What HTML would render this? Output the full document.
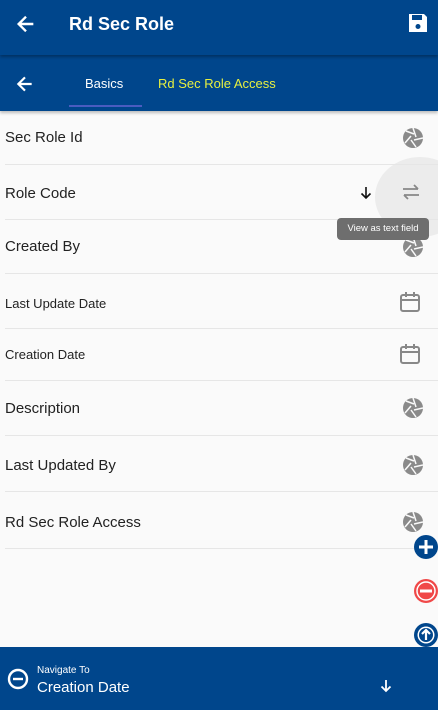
<!DOCTYPE html>
<html><head><meta charset="utf-8"><style>
*{margin:0;padding:0;box-sizing:border-box}
body{width:438px;height:710px;overflow:hidden;background:#fafafa;font-family:"Liberation Sans",sans-serif;position:relative}
.top{position:absolute;left:0;top:0;width:438px;height:55px;background:#00468c;box-shadow:0 2px 3px rgba(0,0,0,.3);z-index:2}
.tabs{position:absolute;left:0;top:55px;width:438px;height:56px;background:#00468c;box-shadow:0 2px 3px rgba(0,0,0,.25);z-index:1}
.t{position:absolute;color:#fff}
.row{position:absolute;left:5px;width:433px;border-bottom:1px solid #e6e6e6}
.lab{position:absolute;left:0;color:#222;font-size:15px}
.ic{position:absolute;left:403px}
.bot{position:absolute;left:0;top:647px;width:438px;height:63px;background:#00468c}
</style></head><body>
<div class="top">
<svg class="t" style="left:15px;top:13px" width="22" height="22" viewBox="0 0 24 24"><path d="M20 12H5M12 4l-8 8 8 8" stroke="#fff" stroke-width="2.6" fill="none"/></svg>
<div class="t" style="left:69px;top:14px;font-size:18px;font-weight:bold">Rd Sec Role</div>
<svg class="t" style="left:408px;top:13px" width="20" height="20" viewBox="0 0 20 20"><path d="M1 1h15l3 3v15H1z" fill="#fff"/><rect x="4" y="2" width="10" height="5" fill="#00468c"/><circle cx="10" cy="13.5" r="2.5" fill="#00468c"/></svg>
</div>
<div class="tabs">
<svg class="t" style="left:15px;top:19px" width="20" height="20" viewBox="0 0 24 24"><path d="M20 12H5M12 4l-8 8 8 8" stroke="#fff" stroke-width="2.6" fill="none"/></svg>
<div class="t" style="left:85px;top:21px;font-size:13px">Basics</div>
<div class="t" style="left:158px;top:21px;font-size:13px;color:#e6f040">Rd Sec Role Access</div>
<div style="position:absolute;left:69px;top:50px;width:73px;height:2px;background:#4a5cc0"></div>
</div>
<div style="position:absolute;left:375px;top:157px;width:90px;height:80px;border-radius:50%;background:#ececec"></div>

<div class="row" style="top:111px;height:54px"><div class="lab" style="top:18px">Sec Role Id</div></div>
<div class="row" style="top:165px;height:55px"><div class="lab" style="top:20px">Role Code</div></div>
<div class="row" style="top:220px;height:54px"><div class="lab" style="top:18px">Created By</div></div>
<div class="row" style="top:274px;height:55px"><div class="lab" style="top:22px;font-size:13px">Last Update Date</div></div>
<div class="row" style="top:329px;height:52px"><div class="lab" style="top:18px;font-size:13px">Creation Date</div></div>
<div class="row" style="top:381px;height:55px"><div class="lab" style="top:19px">Description</div></div>
<div class="row" style="top:436px;height:56px"><div class="lab" style="top:21px">Last Updated By</div></div>
<div class="row" style="top:492px;height:57px"><div class="lab" style="top:22px">Rd Sec Role Access</div></div>

<svg width="0" height="0" style="position:absolute"><defs><g id="ap"><circle cx="10" cy="10" r="10" fill="#8a8a8a"/><path d="M10 0L13 9M20 10L11 12M13 19L8 12M2 15L8 8M3 3L11 6" stroke="#fafafa" stroke-width="1.5"/></g></defs></svg>
<svg class="ic" style="top:128px" width="20" height="20"><use href="#ap"/></svg>
<svg class="ic" style="top:237px" width="20" height="20"><use href="#ap"/></svg>
<svg class="ic" style="top:398px" width="20" height="20"><use href="#ap"/></svg>
<svg class="ic" style="top:455px" width="20" height="20"><use href="#ap"/></svg>
<svg class="ic" style="top:512px" width="20" height="20"><use href="#ap"/></svg>
<svg style="position:absolute;left:360px;top:186px" width="12" height="14" viewBox="0 0 12 14"><path d="M6 1v11M1.5 7.5L6 12l4.5-4.5" stroke="#111" stroke-width="1.6" fill="none"/></svg>
<svg style="position:absolute;left:401px;top:183px" width="20" height="18" viewBox="0 0 20 18"><path d="M2 6h15M13 2l4 4M18 12H3M7 16l-4-4" stroke="#888" stroke-width="1.8" fill="none"/></svg>
<div style="position:absolute;left:337px;top:218px;width:92px;height:22px;background:#6e6e6e;border-radius:4px;color:#fff;font-size:9.5px;line-height:22px;text-align:center">View as text field</div>
<svg style="position:absolute;left:399px;top:291px" width="22" height="22" viewBox="0 0 22 22"><rect x="2" y="4" width="18" height="16" rx="2" stroke="#888" stroke-width="2" fill="none"/><path d="M2 9h18M7 1v5M15 1v5" stroke="#888" stroke-width="2"/></svg>
<svg style="position:absolute;left:399px;top:343px" width="22" height="22" viewBox="0 0 22 22"><rect x="2" y="4" width="18" height="16" rx="2" stroke="#888" stroke-width="2" fill="none"/><path d="M2 9h18M7 1v5M15 1v5" stroke="#888" stroke-width="2"/></svg>

<svg style="position:absolute;left:414px;top:535px" width="24" height="24" viewBox="0 0 24 24"><circle cx="12" cy="12" r="12" fill="#00468c"/><path d="M12 5v14M5 12h14" stroke="#fff" stroke-width="3"/></svg>
<svg style="position:absolute;left:414px;top:579px" width="24" height="24" viewBox="0 0 24 24"><circle cx="12" cy="12" r="12" fill="#f04848"/><circle cx="12" cy="12" r="9" fill="none" stroke="#fff" stroke-width="1.5"/><path d="M6 12h12" stroke="#fff" stroke-width="3"/></svg>
<svg style="position:absolute;left:414px;top:623px" width="24" height="24" viewBox="0 0 24 24"><circle cx="12" cy="12" r="12" fill="#00468c"/><circle cx="12" cy="12" r="8.5" fill="#fff"/><circle cx="12" cy="12" r="7" fill="#00468c"/><path d="M12 17V8M8 11l4-4 4 4" stroke="#fff" stroke-width="2.2" fill="none"/></svg>

<div class="bot">
<svg style="position:absolute;left:7px;top:21px" width="22" height="22" viewBox="0 0 22 22"><circle cx="11" cy="11" r="9" fill="none" stroke="#fff" stroke-width="2.4"/><path d="M6 11h10" stroke="#fff" stroke-width="2.4"/></svg>
<div class="t" style="left:37px;top:18px;font-size:10px">Navigate To</div>
<div class="t" style="left:37px;top:32px;font-size:15px">Creation Date</div>
<svg style="position:absolute;left:380px;top:32px" width="12" height="14" viewBox="0 0 12 14"><path d="M6 1v11M1.5 7.5L6 12l4.5-4.5" stroke="#fff" stroke-width="1.8" fill="none"/></svg>
</div>
</body></html>
